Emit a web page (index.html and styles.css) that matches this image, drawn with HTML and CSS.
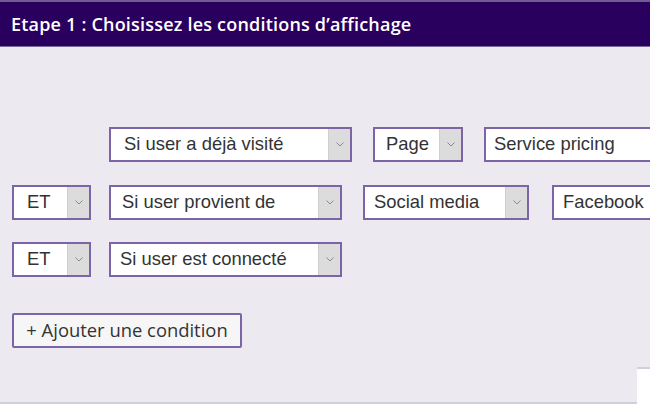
FILE: index.html
```html
<!DOCTYPE html>
<html lang="fr">
<head>
  <meta charset="UTF-8">
  <meta name="viewport" content="width=device-width, initial-scale=1.0">
  <title>Conditions d'affichage</title>
  <link rel="stylesheet" href="styles.css">
</head>
<body>
  <div class="step">
    <div class="step-title">Etape 1 : Choisissez les conditions d’affichage</div>
    <div class="step-body">
      <div class="row first">
        <div class="select cond"><span class="value v15">Si user a déjà visité</span><span class="arrow"><svg width="8" height="5" viewBox="0 0 8 5"><polyline points="0.5,0.5 4,4 7.5,0.5" fill="none" stroke="#8a8a8a" stroke-width="1"/></svg></span></div>
        <div class="select page"><span class="value v13">Page</span><span class="arrow"><svg width="8" height="5" viewBox="0 0 8 5"><polyline points="0.5,0.5 4,4 7.5,0.5" fill="none" stroke="#8a8a8a" stroke-width="1"/></svg></span></div>
        <div class="input open"><span class="value v10">Service pricing</span></div>
      </div>

      <div class="row">
        <div class="select op"><span class="value v15">ET</span><span class="arrow"><svg width="8" height="5" viewBox="0 0 8 5"><polyline points="0.5,0.5 4,4 7.5,0.5" fill="none" stroke="#8a8a8a" stroke-width="1"/></svg></span></div>
        <div class="select cond short"><span class="value v13">Si user provient de</span><span class="arrow"><svg width="8" height="5" viewBox="0 0 8 5"><polyline points="0.5,0.5 4,4 7.5,0.5" fill="none" stroke="#8a8a8a" stroke-width="1"/></svg></span></div>
        <div class="select source"><span class="value v11">Social media</span><span class="arrow"><svg width="8" height="5" viewBox="0 0 8 5"><polyline points="0.5,0.5 4,4 7.5,0.5" fill="none" stroke="#8a8a8a" stroke-width="1"/></svg></span></div>
        <div class="input open gap23"><span class="value v11">Facebook</span></div>
      </div>

      <div class="row">
        <div class="select op"><span class="value v15">ET</span><span class="arrow"><svg width="8" height="5" viewBox="0 0 8 5"><polyline points="0.5,0.5 4,4 7.5,0.5" fill="none" stroke="#8a8a8a" stroke-width="1"/></svg></span></div>
        <div class="select cond short"><span class="value v11">Si user est connecté</span><span class="arrow"><svg width="8" height="5" viewBox="0 0 8 5"><polyline points="0.5,0.5 4,4 7.5,0.5" fill="none" stroke="#8a8a8a" stroke-width="1"/></svg></span></div>
      </div>

      <button class="add-btn">+ Ajouter une condition</button>
    </div>
    <div class="corner"></div>
  </div>
</body>
</html>
```

FILE: styles.css
```css
body {
  margin: 0;
  background-color: #fff;
  font-family: 'Liberation Sans', Arial, sans-serif;
  overflow: hidden;
}

.step {
  position: relative;
  width: 650px;
  height: 404px;
  background-color: #ece9f1;
  border-bottom: 2px solid #d3cedb;
  box-sizing: border-box;
}

.step-title {
  height: 44px;
  background-color: #2a005e;
  border-top: 2px solid #6e5b92;
  border-bottom: 1px solid #7a6a9a;
  color: #fff;
  font-family: 'Open Sans', sans-serif;
  font-weight: 600;
  font-size: 18px;
  line-height: 44px;
  padding-left: 11px;
  letter-spacing: 0.2px;
}

.step-body {
  padding: 80px 0 0 12px;
}

.row {
  display: flex;
  align-items: center;
  height: 35px;
  margin-bottom: 22px;
  white-space: nowrap;
}

.row.first {
  padding-left: 97px;
  margin-bottom: 23px;
}

.select,
.input {
  display: flex;
  align-items: stretch;
  height: 35px;
  box-sizing: border-box;
  border: 2px solid #7c65a6;
  background-color: #fff;
  color: #333;
  font-size: 18.4px;
  flex-shrink: 0;
}

.value {
  flex: 1;
  display: flex;
  align-items: center;
  padding-bottom: 1px;
}

.v10 { padding-left: 8px; }
.v11 { padding-left: 9px; }
.v13 { padding-left: 11px; }
.v15 { padding-left: 13px; }

.arrow {
  width: 21px;
  background-color: #dcdcdc;
  border-left: 1px solid #cfcfcf;
  display: flex;
  align-items: center;
  justify-content: center;
}

.op {
  width: 79px;
  margin-right: 18px;
}

.cond {
  width: 243px;
  margin-right: 21px;
}

.cond.short {
  width: 233px;
}

.page {
  width: 90px;
  margin-right: 21px;
}

.source {
  width: 166px;
}

.input.open {
  flex: 1;
  border-right: none;
}

.gap23 {
  margin-left: 23px;
}

.add-btn {
  margin-top: 14px;
  height: 35px;
  width: 230px;
  box-sizing: border-box;
  border: 2px solid #7c65a6;
  border-radius: 2px;
  background-color: #f6f6f6;
  color: #333;
  font-family: 'Open Sans', sans-serif;
  font-size: 18.4px;
  padding: 0 0 2px 0;
  text-align: center;
  white-space: nowrap;
}

.corner {
  position: absolute;
  right: 0;
  bottom: -2px;
  width: 13px;
  height: 35px;
  background-color: #fff;
  border-top: 2px solid #d3cedb;
}
```
